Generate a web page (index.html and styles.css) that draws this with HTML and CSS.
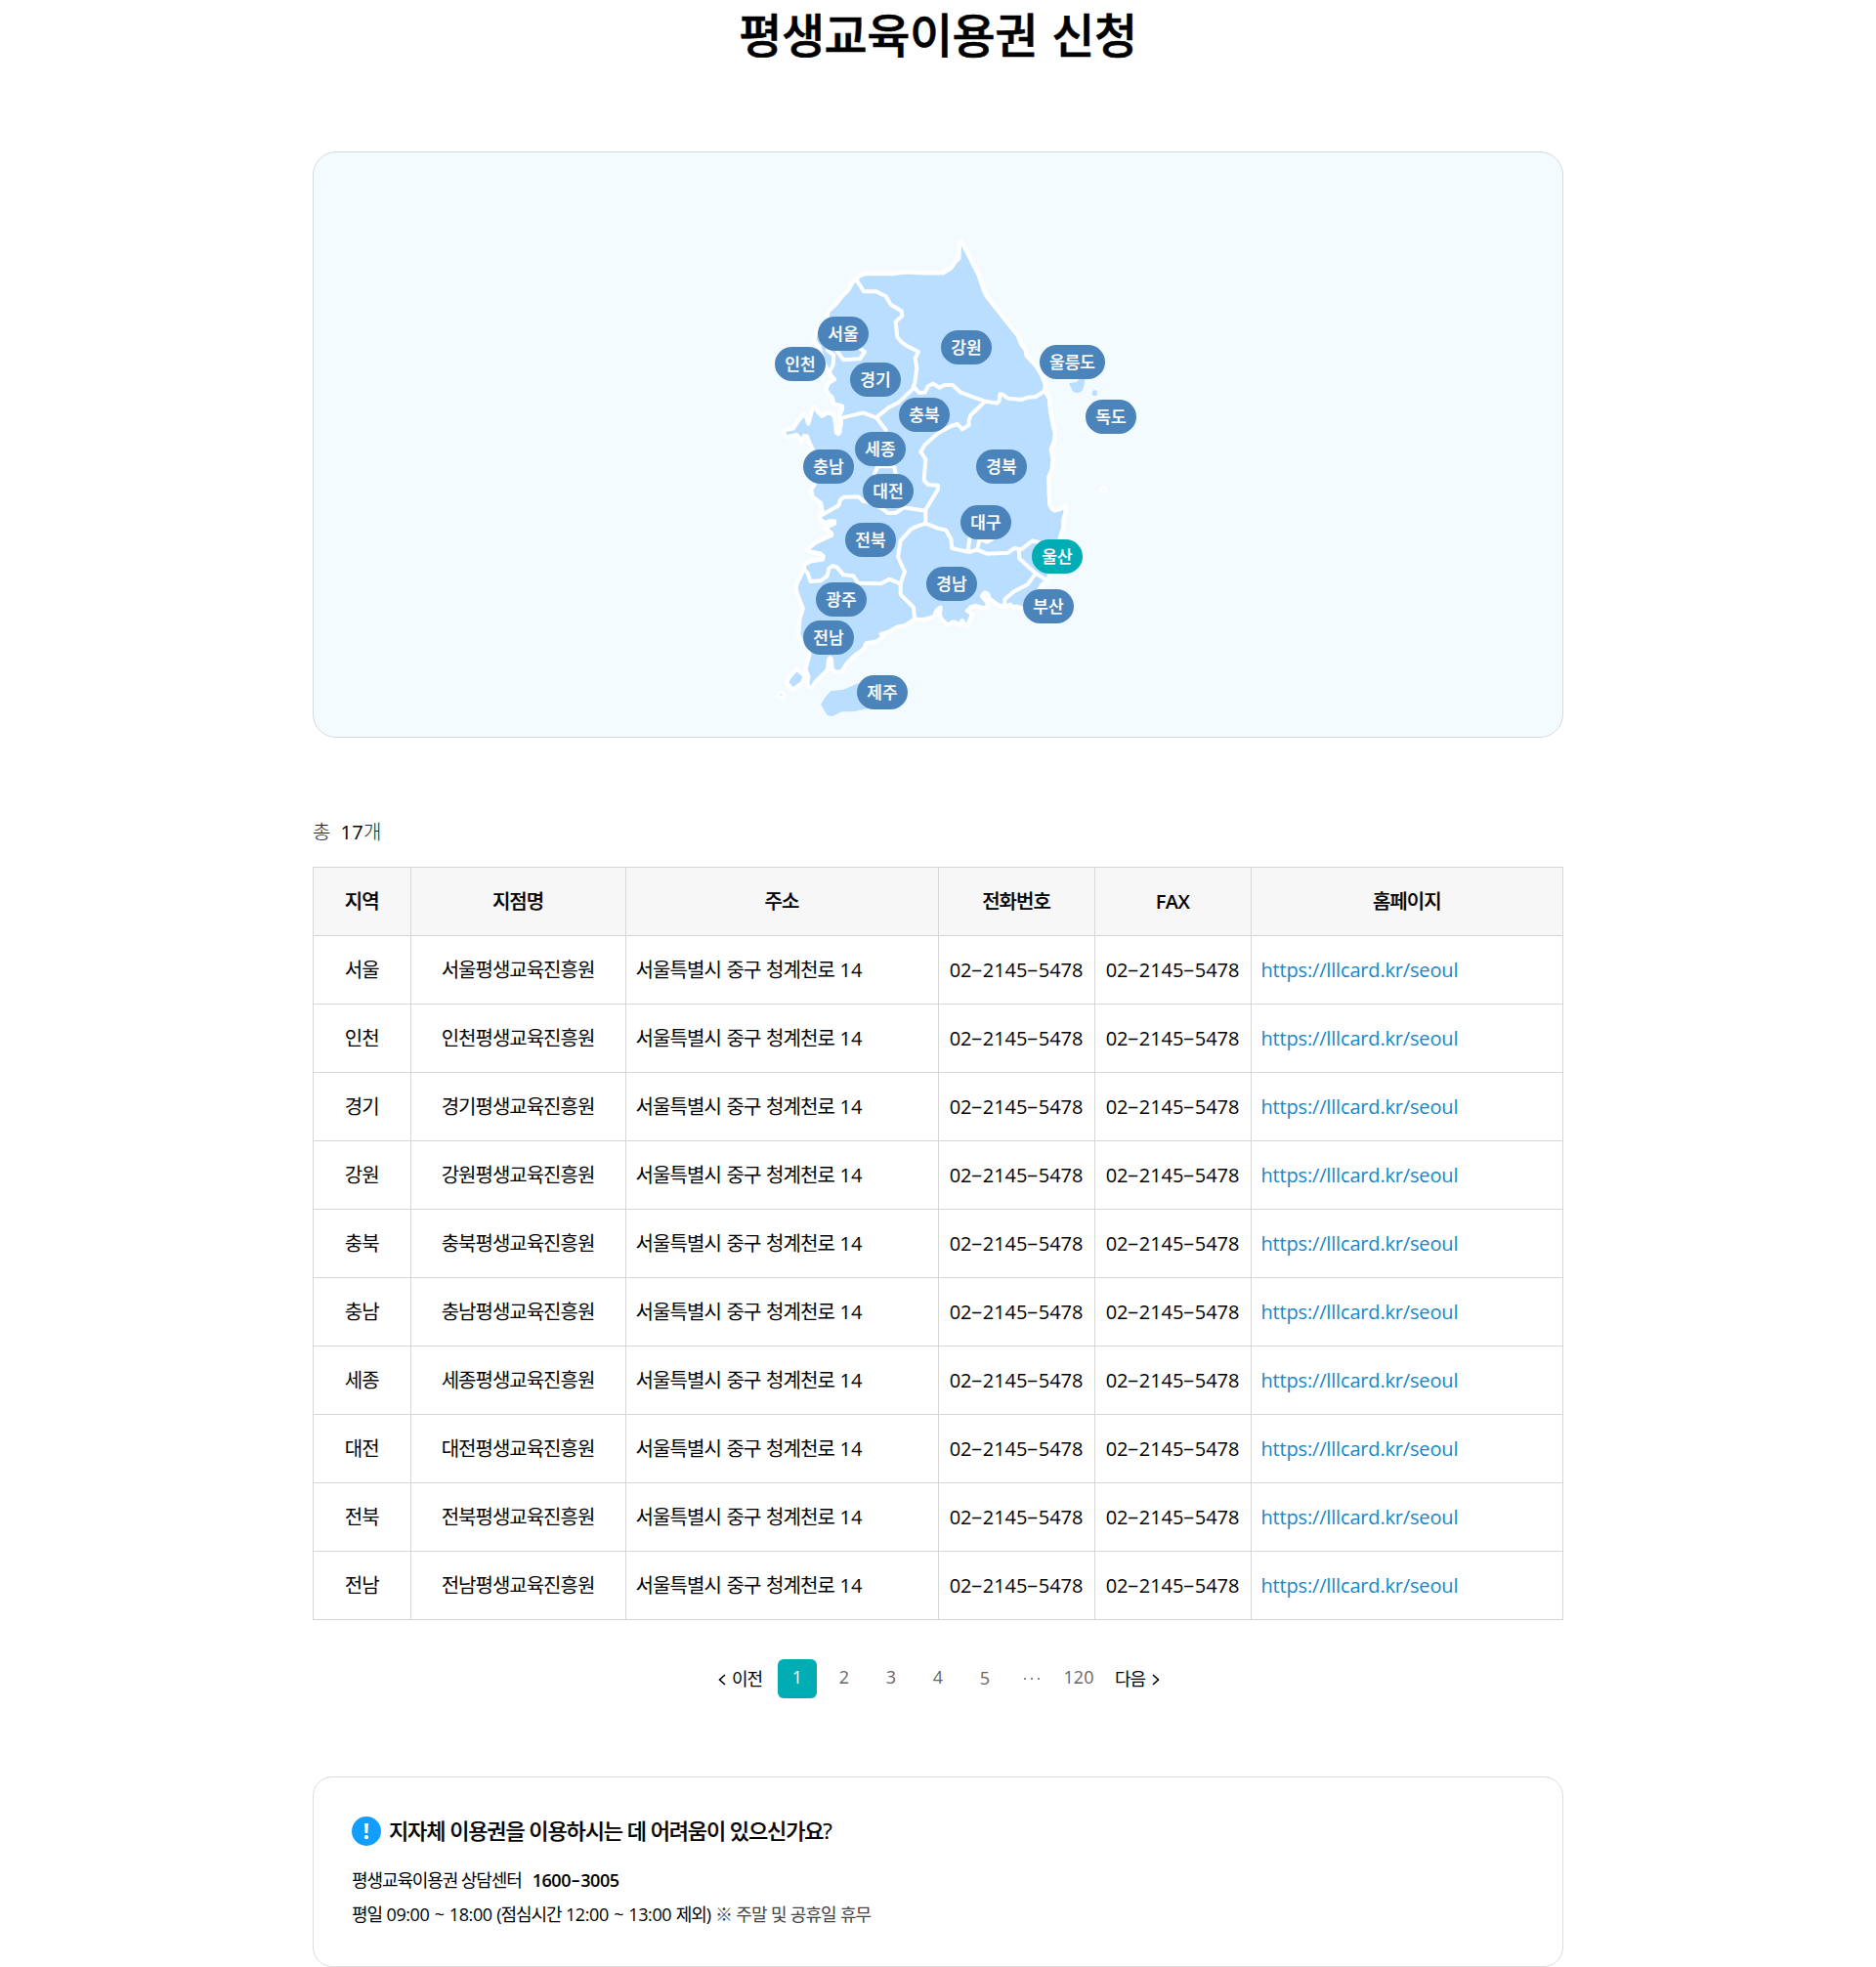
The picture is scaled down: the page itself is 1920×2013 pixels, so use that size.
FILE: index.html
```html
<!DOCTYPE html>
<html lang="ko">
<head>
<meta charset="utf-8">
<title>평생교육이용권 신청</title>
<link rel="stylesheet" href="styles.css">
</head>
<body>
<main class="page">
  <h1 class="page-title">평생교육이용권 신청</h1>

  <section class="map-card">
    <div class="map">
      <svg class="map-shape" viewBox="0 0 1200 1560" aria-hidden="true">
        <g class="land">
          <path d="M612 50 640 105 665 155 680 200 690 220 745 290 785 340 795 365 808 382 812 402 840 432 860 465 869 490 868 508 882 535 885 570 892 610 900 640 897 665 887 690 893 720 890 750 880 775 881 820 883 860 890 872 898 877 915 873 933 862 931 885 925 905 925 930 915 960 900 1030 882 1075 878 1092 860 1105 850 1120 820 1175 798 1178 780 1172 772 1176 762 1166 750 1173 725 1168 700 1150 691 1132 683 1130 675 1140 690 1158 695 1170 680 1177 655 1170 640 1175 630 1185 645 1195 640 1208 634 1220 633 1232 622 1228 614 1215 604 1230 592 1220 585 1220 570 1230 550 1210 545 1195 548 1175 535 1185 528 1203 505 1210 490 1213 470 1210 440 1230 415 1235 390 1250 365 1257 372 1265 350 1280 320 1285 312 1303 285 1322 262 1345 243 1373 222 1372 214 1362 213 1335 209 1330 204 1335 202 1365 180 1388 165 1402 153 1420 144 1420 139 1412 142 1388 133 1365 145 1320 142 1295 125 1285 112 1260 115 1210 125 1178 112 1145 103 1118 108 1098 128 1057 130 1043 150 1032 185 1028 188 1018 180 1010 140 1002 138 997 165 975 213 953 213 947 200 937 190 932 222 917 222 910 210 910 190 915 178 903 178 890 185 880 180 855 155 835 150 815 162 795 170 740 140 700 155 690 145 670 138 650 130 648 120 668 115 655 105 645 75 653 64 637 72 630 95 625 110 603 128 582 135 588 142 610 150 580 157 560 164 558 170 573 184 587 200 577 215 580 222 590 226 615 228 638 234 642 238 636 243 605 237 587 246 565 246 557 220 550 215 530 205 522 195 505 205 485 222 475 205 455 190 425 175 375 160 355 165 325 195 300 203 265 225 245 245 220 265 200 275 180 288 168 300 156 318 150 360 150 400 150 440 145 500 148 555 148 580 133 592 115 604 103 606 55Z"/>
          <path d="M75 1407 82 1390 100 1370 108 1365 128 1383 130 1391 123 1407 95 1427Z"/>
        </g>
        <path class="rock" d="M50 1436 60 1436 69 1444 64 1452 48 1446Z"/>
        <g class="borders">
          <path d="M288 168 300 185 312 205 350 205 380 220 395 245 428 265 430 280 410 298 415 345 430 362 445 372 480 390 470 410 475 440 468 490 462 505 420 545 390 560 350 592"/>
          <path d="M465 495 480 515 500 515 510 495 525 488 545 500 560 492 585 492 610 515 650 530 685 542 722 548 728 540 730 520 737 521 755 533 795 537 817 530 840 528 868 510"/>
          <path d="M685 542 640 585 635 600 635 615 615 628 600 612 580 618 540 640 500 675 487 697 502 720 497 785 510 798 540 800 540 812 502 875 502 917"/>
          <path d="M248 592 310 577 350 592 380 630 M345 765 355 742 405 742 412 770"/>
          <path d="M185 890 235 862 240 845 250 836 295 835 310 848 330 852 370 872 385 885 410 885 435 868 500 878"/>
          <path d="M502 917 470 928 457 935 425 970 417 1020 438 1065 425 1102"/>
          <path d="M502 917 540 932 565 938 580 965 583 993 600 997 635 1005 660 998 690 1010 755 1007 775 993 795 997 830 970 850 975"/>
          <path d="M638 955 632 1000 M668 965 660 998 M670 965 690 974 705 965"/>
          <path d="M788 998 790 1025 840 1070 875 1092 M840 1070 815 1105 775 1125 745 1150 745 1168"/>
          <path d="M128 1057 140 1070 148 1095 180 1093 200 1078 205 1055 218 1047 230 1052 250 1075 280 1078 295 1100 365 1102 390 1088 425 1102 425 1135 465 1175 468 1210"/>
          <path d="M230 388 250 415 300 412 315 390 300 380 M200 385 220 400 218 430 205 455"/>
        </g>
        <g class="islets">
          <path d="M180 1472 195 1450 210 1432 250 1427 295 1408 350 1410 325 1485 280 1495 245 1495 215 1509 200 1506Z"/>
          <path d="M942 487 965 483 975 473 992 473 988 495 982 510 970 517 955 514Z"/>
          <ellipse cx="1021" cy="517" rx="8" ry="9"/>
        </g>
        <circle class="dokdo" cx="1048" cy="813" r="8"/>
      </svg>
      <button class="pin" style="left:57px;top:94px">서울</button>
      <button class="pin" style="left:13px;top:125px">인천</button>
      <button class="pin" style="left:90px;top:141px">경기</button>
      <button class="pin" style="left:183px;top:108px">강원</button>
      <button class="pin" style="left:140px;top:177px">충북</button>
      <button class="pin pin-wide" style="left:284px;top:123px">울릉도</button>
      <button class="pin" style="left:331px;top:179px">독도</button>
      <button class="pin" style="left:42px;top:230px">충남</button>
      <button class="pin" style="left:95px;top:212px">세종</button>
      <button class="pin" style="left:103px;top:255px">대전</button>
      <button class="pin" style="left:219px;top:230px">경북</button>
      <button class="pin" style="left:203px;top:287px">대구</button>
      <button class="pin" style="left:85px;top:305px">전북</button>
      <button class="pin pin-active" style="left:276px;top:322px">울산</button>
      <button class="pin" style="left:168px;top:350px">경남</button>
      <button class="pin" style="left:267px;top:373px">부산</button>
      <button class="pin" style="left:55px;top:366px">광주</button>
      <button class="pin" style="left:42px;top:405px">전남</button>
      <button class="pin" style="left:97px;top:461px">제주</button>
    </div>
  </section>

  <p class="total">총 <strong>17</strong>개</p>

  <table class="branches">
    <colgroup><col class="c-region"><col class="c-name"><col class="c-addr"><col class="c-tel"><col class="c-tel"><col class="c-url"></colgroup>
    <thead>
      <tr><th>지역</th><th>지점명</th><th>주소</th><th>전화번호</th><th class="latin">FAX</th><th>홈페이지</th></tr>
    </thead>
    <tbody id="branch-rows"></tbody>
  </table>

  <nav class="pager">
    <a class="step"><svg class="chev" viewBox="0 0 8 12"><path d="M7 1 1.5 6 7 11"/></svg>이전</a>
    <a class="num num-on">1</a>
    <a class="num">2</a>
    <a class="num">3</a>
    <a class="num">4</a>
    <a class="num num-low">5</a>
    <span class="num dots"><i></i><i></i><i></i></span>
    <a class="num">120</a>
    <a class="step step-next">다음<svg class="chev" viewBox="0 0 8 12"><path d="M1 1 6.5 6 1 11"/></svg></a>
  </nav>

  <section class="help">
    <h2 class="help-title">
      <svg class="help-icon" viewBox="0 0 30 30"><circle cx="15" cy="15" r="15"/><path d="M13.1 7h3.8l-.5 10h-2.8z"/><circle class="point" cx="15" cy="21.2" r="2.1"/></svg>
      <span>지자체 이용권을 이용하시는 데 어려움이 있으신가요?</span>
    </h2>
    <p class="help-line"><span>평생교육이용권 상담센터</span><strong>1600<span class="dash">-</span>3005</strong></p>
    <p class="help-line"><span class="hours">평일 <span class="time">09:00 ~ 18:00</span> (점심시간 <span class="time">12:00 ~ 13:00</span> 제외)</span><span class="note">※ 주말 및 공휴일 휴무</span></p>
  </section>
</main>
<script src="branches.js"></script>
</body>
</html>
```
FILE: branches.js
```js
const regions = ['서울', '인천', '경기', '강원', '충북', '충남', '세종', '대전', '전북', '전남'];
const dash = '<span class="dash">-</span>';
const phone = ['02', '2145', '5478'].join(dash);

document.getElementById('branch-rows').innerHTML = regions.map((region) => `
  <tr>
    <td>${region}</td>
    <td>${region}평생교육진흥원</td>
    <td class="addr">서울특별시 중구 청계천로 <span class="house">14</span></td>
    <td class="tel">${phone}</td>
    <td class="tel">${phone}</td>
    <td class="url"><a>https://lllcard.kr/seoul</a></td>
  </tr>`).join('');
```
FILE: styles.css
```css
* { box-sizing: border-box; }

body {
  margin: 0;
  background: #fff;
  color: #000;
  font-family: "Open Sans", "Noto Sans CJK KR", sans-serif;
  font-size: 20px;
}

.page {
  width: 1280px;
  height: 2013px;
  margin: 0 auto;
}

.page-title {
  margin: 0;
  height: 155px;
  line-height: 72px;
  font-size: 48px;
  font-weight: 500;
  letter-spacing: -0.5px;
  word-spacing: 2.5px;
  text-align: center;
  -webkit-text-stroke: 0.6px #000;
}

/* region map */
.map-card {
  height: 600px;
  padding: 74px 0 0 459px;
  border: 1px solid #d7d9da;
  border-radius: 24px;
  background: #f3fbff;
}
.map { position: relative; width: 400px; height: 520px; }
.map-shape { display: block; width: 400px; height: 520px; }
.land { fill: #badeff; stroke: #fff; stroke-width: 13; stroke-linejoin: round; }
.rock { fill: #badeff; stroke: #fff; stroke-width: 10; stroke-linejoin: round; }
.borders { fill: none; stroke: #fff; stroke-width: 12; stroke-linejoin: round; stroke-linecap: round; }
.islets { fill: #badeff; }
.dokdo { fill: #f3fbff; stroke: #fff; stroke-width: 7; }
.pin {
  position: absolute;
  width: 52px;
  height: 35px;
  padding: 0;
  border: 0;
  border-radius: 18px;
  background: #4b84ba;
  color: #fff;
  font-family: inherit;
  font-size: 17px;
  font-weight: 500;
  line-height: 34px;
  letter-spacing: 0;
  text-align: center;
  white-space: nowrap;
  -webkit-text-stroke: 0.2px #fff;
}
.pin-wide { width: 67px; }
.pin-active { background: #00adb5; }

.total {
  margin: 82px 0 21px;
  line-height: 29px;
  font-weight: 300;
  color: #222;
  word-spacing: 5px;
}
.total strong { font-weight: 500; letter-spacing: 0.2px; color: #000; }

/* branch list */
.branches {
  width: 1280px;
  table-layout: fixed;
  border-collapse: collapse;
}
.c-region { width: 99.5px; }
.c-name { width: 220px; }
.c-addr { width: 320px; }
.c-tel { width: 160px; }
.branches th, .branches td {
  height: 70px;
  padding: 0;
  border: 1px solid #d7d7d7;
  line-height: 30px;
  letter-spacing: -1px;
  text-align: center;
  white-space: nowrap;
}
.branches th { background: #f7f7f7; font-weight: 500; -webkit-text-stroke: 0.2px #000; }
.branches .latin { font-weight: 600; letter-spacing: -0.6px; -webkit-text-stroke: 0; }
.branches .addr { padding-left: 10px; text-align: left; letter-spacing: -0.9px; word-spacing: 1.2px; }
.house { letter-spacing: 0; }
.branches .tel { letter-spacing: -0.05px; }
.branches .url { padding-left: 10px; text-align: left; letter-spacing: -0.17px; }
.url a { color: #1787c6; }

/* wide hyphen, centred on the digits */
.dash {
  display: inline-block;
  width: 0.57em;
  text-align: center;
  letter-spacing: 0;
  transform: translateY(-1px) scaleX(1.9);
}

.pager {
  display: flex;
  justify-content: center;
  gap: 8px;
  margin-top: 40px;
  padding-left: 2px;
  height: 40px;
  line-height: 37px;
  font-size: 18px;
}
.num { width: 40px; color: #666; text-align: center; border-radius: 6px; }
.num-on { background: #00adb5; color: #fff; }
.num-low { padding-top: 1px; }
.dots { display: flex; align-items: center; justify-content: center; gap: 5px; }
.dots i { width: 2px; height: 2px; border-radius: 1px; background: #666; }
.step { display: flex; align-items: center; gap: 6px; padding-right: 8px; letter-spacing: -1px; }
.step-next { padding: 0 0 0 9px; gap: 7px; }
.chev { width: 8px; height: 12px; margin-top: 2px; fill: none; stroke: #000; stroke-width: 1.6; }

/* contact box */
.help {
  height: 195px;
  margin-top: 80px;
  padding: 36px 40px 0 39px;
  border: 1px solid #ddd;
  border-radius: 20px;
}
.help-title {
  display: flex;
  align-items: center;
  gap: 8px;
  margin: 0 0 16px;
  height: 38px;
  font-size: 22px;
  font-weight: 500;
  line-height: 34px;
  letter-spacing: -1.15px;
  word-spacing: 0.3px;
  -webkit-text-stroke: 0.2px #000;
}
.help-title span { margin-top: -3px; }
.help-icon { width: 30px; height: 30px; fill: #129eff; }
.help-icon path, .help-icon .point { fill: #fff; }
.help-icon * { stroke: none; }
.help-line { display: flex; margin: 0; height: 35px; line-height: 30px; font-size: 18px; letter-spacing: -1.1px; }
.help-line strong { margin-left: 11px; font-weight: 600; letter-spacing: -0.45px; }
.help-line .dash { transform: translateY(-1px) scaleX(1.6); }
.hours { word-spacing: 1px; }
.time { letter-spacing: -0.4px; }
.note { margin-left: 5px; color: #444; letter-spacing: -0.98px; word-spacing: 0.7px; }
```
